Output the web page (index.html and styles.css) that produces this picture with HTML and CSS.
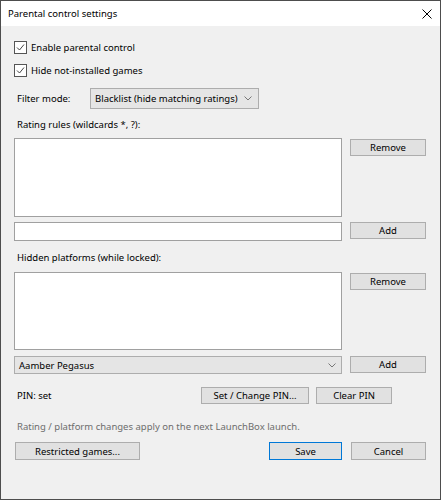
FILE: index.html
```html
<!DOCTYPE html>
<html>
<head>
<meta charset="utf-8">
<link rel="stylesheet" href="styles.css">
</head>
<body>
<div class="window">
  <div class="titlebar">
    <span class="title">Parental control settings</span>
    <svg class="close" width="10" height="10" viewBox="0 0 10 10"><path d="M0.5 0.5 L9.5 9.5 M9.5 0.5 L0.5 9.5" stroke="#000" stroke-width="1" fill="none"/></svg>
  </div>
  <div class="content">
    <div class="check-row r-enable">
      <span class="checkbox"><svg width="11" height="11" viewBox="0 0 11 11"><path d="M2 5.5 L4.5 8 L9 2.5" stroke="#444" stroke-width="1" fill="none"/></svg></span>
      <span class="label">Enable parental control</span>
    </div>
    <div class="check-row r-hide">
      <span class="checkbox"><svg width="11" height="11" viewBox="0 0 11 11"><path d="M2 5.5 L4.5 8 L9 2.5" stroke="#444" stroke-width="1" fill="none"/></svg></span>
      <span class="label">Hide not-installed games</span>
    </div>
    <div class="filter-row">
      <span class="label filter-label">Filter mode:</span>
      <div class="combo filter-combo">
        <span>Blacklist (hide matching ratings)</span>
        <svg class="chev" width="8" height="5" viewBox="0 0 8 5"><path d="M0.5 0.5 L4 4 L7.5 0.5" stroke="#777" stroke-width="1" fill="none"/></svg>
      </div>
    </div>
    <div class="section-label l-rating">Rating rules (wildcards *, ?):</div>
    <div class="list-row l1">
      <div class="listbox lb1"></div>
      <button class="btn side">Remove</button>
    </div>
    <div class="input-row">
      <div class="textbox"></div>
      <button class="btn side">Add</button>
    </div>
    <div class="section-label l-hidden">Hidden platforms (while locked):</div>
    <div class="list-row l2">
      <div class="listbox lb2"></div>
      <button class="btn side">Remove</button>
    </div>
    <div class="input-row r-platform">
      <div class="combo platform-combo">
        <span>Aamber Pegasus</span>
        <svg class="chev" width="8" height="5" viewBox="0 0 8 5"><path d="M0.5 0.5 L4 4 L7.5 0.5" stroke="#777" stroke-width="1" fill="none"/></svg>
      </div>
      <button class="btn side">Add</button>
    </div>
    <div class="pin-row">
      <span class="label pin-label">PIN: set</span>
      <button class="btn btn-setpin">Set / Change PIN...</button>
      <button class="btn btn-clear">Clear PIN</button>
    </div>
    <div class="note">Rating / platform changes apply on the next LaunchBox launch.</div>
    <div class="bottom-row">
      <button class="btn btn-restricted">Restricted games...</button>
      <button class="btn btn-save">Save</button>
      <button class="btn btn-cancel">Cancel</button>
    </div>
  </div>
</div>
</body>
</html>
```
FILE: styles.css
```css
html, body {
  margin: 0;
  padding: 0;
  background: #f0f0f0;
}
body {
  font-family: "Noto Sans", "Liberation Sans", sans-serif;
  font-size: 9.5px;
  color: #000;
}
.window {
  width: 441px;
  height: 500px;
  box-sizing: border-box;
  border: 1px solid #4d4d4d;
  background: #f0f0f0;
}
.titlebar {
  height: 25px;
  background: #fff;
  display: flex;
  align-items: center;
  justify-content: space-between;
  padding: 0 8px 0 7px;
}
.title {
  font-size: 9.5px;
  margin-top: -1px;
}
.close {
  display: block;
  margin-top: 1px;
}
.content {
  padding: 0 13px 0 13px;
}
.check-row {
  display: flex;
  align-items: center;
  height: 13px;
}
.r-enable { margin-top: 15px; }
.r-hide { margin-top: 10px; }
.checkbox {
  width: 13px;
  height: 13px;
  box-sizing: border-box;
  border: 1px solid #555;
  background: #fff;
  display: flex;
  align-items: center;
  justify-content: center;
  margin-right: 4px;
}
.checkbox svg { display: block; }
.label {
  line-height: 13px;
  white-space: nowrap;
}
.filter-row {
  display: flex;
  align-items: center;
  height: 21px;
  margin-top: 11px;
}
.filter-label {
  margin-left: 3px;
  width: 73px;
}
.combo {
  box-sizing: border-box;
  border: 1px solid #adadad;
  background: #e5e5e5;
  display: flex;
  align-items: center;
  justify-content: space-between;
  padding: 0 6px 0 4px;
  white-space: nowrap;
}
.filter-combo {
  width: 169px;
  height: 21px;
}
.chev { display: block; }
.section-label {
  line-height: 14px;
  padding-left: 3px;
}
.l-rating { margin-top: 9px; }
.l-hidden { margin-top: 10px; }
.list-row {
  display: flex;
  align-items: flex-start;
  gap: 8px;
}
.l1 { margin-top: 6px; }
.l2 { margin-top: 7px; }
.listbox {
  width: 328px;
  box-sizing: border-box;
  border: 1px solid #a0a0a0;
  background: #fff;
}
.lb1 { height: 79px; }
.lb2 { height: 78px; }
.btn {
  font-family: inherit;
  font-size: 9.5px;
  color: #000;
  box-sizing: border-box;
  height: 17px;
  border: 1px solid #adadad;
  background: #e1e1e1;
  padding: 0;
  margin: 0;
  line-height: 15px;
}
.side {
  width: 76px;
}
.list-row .side { margin-top: 1px; }
.input-row {
  display: flex;
  align-items: flex-start;
  gap: 8px;
  margin-top: 5px;
}
.textbox {
  width: 328px;
  height: 19px;
  box-sizing: border-box;
  border: 1px solid #a0a0a0;
  background: #fff;
}
.r-platform { margin-top: 6px; }
.platform-combo {
  width: 328px;
  height: 18px;
  padding-right: 5px;
}
.pin-row {
  display: flex;
  align-items: center;
  height: 17px;
  margin-top: 13px;
}
.pin-label {
  margin-left: 3px;
  width: 184px;
}
.btn-setpin { width: 108px; }
.btn-clear { width: 76px; margin-left: 7px; }
.note {
  color: #6d6d6d;
  line-height: 14px;
  padding-left: 3px;
  margin-top: 16px;
}
.bottom-row {
  display: flex;
  align-items: center;
  margin-top: 8px;
  height: 18px;
}
.bottom-row .btn { height: 18px; }
.btn-restricted { width: 125px; margin-left: 1px; }
.btn-save {
  width: 73px;
  margin-left: 129px;
  border: 1px solid #0078d7;
  box-shadow: inset 0 0 0 1px #e1e1e1;
}
.btn-cancel { width: 75px; margin-left: 9px; }
```
